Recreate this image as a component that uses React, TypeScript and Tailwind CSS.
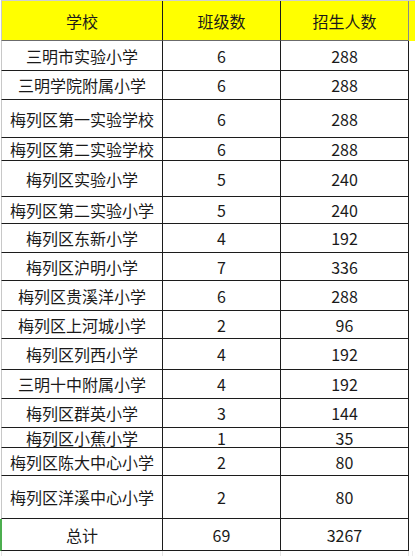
import React from "react";

interface Row {
  name: string;
  classes: string;
  students: string;
  h: string;
}

const rows: Row[] = [
  { name: "三明市实验小学", classes: "6", students: "288", h: "h-[30px]" },
  { name: "三明学院附属小学", classes: "6", students: "288", h: "h-[29px]" },
  { name: "梅列区第一实验学校", classes: "6", students: "288", h: "h-[38px]" },
  { name: "梅列区第二实验学校", classes: "6", students: "288", h: "h-[23px]" },
  { name: "梅列区实验小学", classes: "5", students: "240", h: "h-[36px]" },
  { name: "梅列区第二实验小学", classes: "5", students: "240", h: "h-[27px]" },
  { name: "梅列区东新小学", classes: "4", students: "192", h: "h-[29px]" },
  { name: "梅列区沪明小学", classes: "7", students: "336", h: "h-[28px]" },
  { name: "梅列区贵溪洋小学", classes: "6", students: "288", h: "h-[30px]" },
  { name: "梅列区上河城小学", classes: "2", students: "96", h: "h-[28px]" },
  { name: "梅列区列西小学", classes: "4", students: "192", h: "h-[31px]" },
  { name: "三明十中附属小学", classes: "4", students: "192", h: "h-[29px]" },
  { name: "梅列区群英小学", classes: "3", students: "144", h: "h-[29px]" },
  { name: "梅列区小蕉小学", classes: "1", students: "35", h: "h-[20px]" },
  { name: "梅列区陈大中心小学", classes: "2", students: "80", h: "h-[28px]" },
  { name: "梅列区洋溪中心小学", classes: "2", students: "80", h: "h-[43px]" },
];

const cell = "flex items-center justify-center border-r border-b border-[#1c1c1c]";

const App: React.FC = () => {
  return (
    <div
      className="w-[415px] h-[556px] bg-white text-[#1a1a1a] text-[16px] leading-none overflow-hidden pl-px"
      style={{ fontFamily: '"Noto Sans CJK SC", "Noto Sans", sans-serif' }}
    >
      <div className="border-t border-[#cfcfcf]">
        {/* header */}
        <div className="grid grid-cols-[162px_118px_128px] h-[40px] bg-[#ffff00]">
          <div className={`${cell} border-l border-l-[#c8c8c8] border-b-[#6b6b6b]`}>学校</div>
          <div className={`${cell} border-b-[#6b6b6b]`}>班级数</div>
          <div className={`${cell} border-b-[#6b6b6b] border-r-[#8a8a8a]`}>招生人数</div>
        </div>

        {rows.map((r, i) => (
          <div key={i} className={`grid grid-cols-[162px_118px_128px] ${r.h}`}>
            <div className={`${cell} border-l border-l-[#c8c8c8]`}>{r.name}</div>
            <div className={cell}>{r.classes}</div>
            <div className={cell}>{r.students}</div>
          </div>
        ))}

        {/* total */}
        <div className="grid grid-cols-[163px_118px_128px] h-[32px] -ml-px">
          <div className={`${cell} border-l-2 border-l-[#4cae4f]`}>总计</div>
          <div className={cell}>69</div>
          <div className={cell}>3267</div>
        </div>

        {/* empty sheet row */}
        <div className="grid grid-cols-[162px_118px_128px_4px] h-[8px]">
          <div className="border-l border-r border-[#e3e3e3]" />
          <div className="border-r border-[#e3e3e3]" />
          <div className="border-r border-[#e3e3e3]" />
          <div className="border-r border-[#ececec]" />
        </div>
      </div>
    </div>
  );
};

export default App;
